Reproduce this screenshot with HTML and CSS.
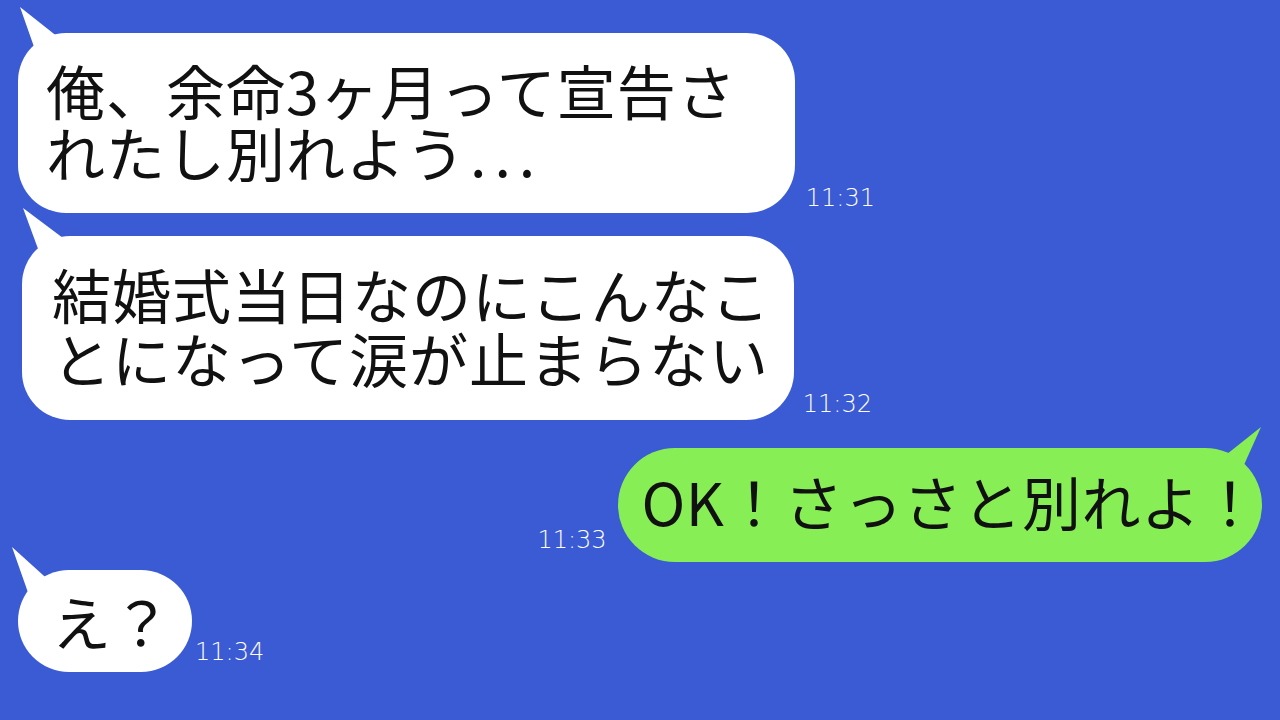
FILE: index.html
```html
<!DOCTYPE html>
<html lang="ja">
<head>
<meta charset="utf-8">
<link rel="stylesheet" href="styles.css">
</head>
<body>
<main class="chat">
  <div class="row row-1">
    <div class="bubble bubble-in b1">
      <svg class="tail tail-left" width="70" height="80" viewBox="0 0 70 80"><polygon points="12,4 60,42 55,70 31,58"/></svg>
      <p class="msg">俺、余命3ヶ月って宣告さ<br>れたし別れよう<span class="dots">...</span></p>
    </div>
    <span class="time t1">11:31</span>
  </div>
  <div class="row row-2">
    <div class="bubble bubble-in b2">
      <svg class="tail tail-left" width="70" height="80" viewBox="0 0 70 80"><polygon points="11,2 63,41 55,70 32,59"/></svg>
      <p class="msg">結婚式当日なのにこんなこ<br>とになって涙が止まらない</p>
    </div>
    <span class="time t2">11:32</span>
  </div>
  <div class="row row-out">
    <span class="time t3">11:33</span>
    <div class="bubble bubble-out b3">
      <svg class="tail tail-right" width="70" height="80" viewBox="0 0 70 80"><polygon points="59,9 15,44 20,75 37,58"/></svg>
      <p class="msg">OK！さっさと別れよ！</p>
    </div>
  </div>
  <div class="row row-4">
    <div class="bubble bubble-in b4">
      <svg class="tail tail-left" width="70" height="80" viewBox="0 0 70 80"><polygon points="4,7 46,45 50,70 23,61"/></svg>
      <p class="msg">え？</p>
    </div>
    <span class="time t4">11:34</span>
  </div>
</main>
</body>
</html>
```
FILE: styles.css
```css
html, body {
  margin: 0;
  padding: 0;
}
body {
  background: #3a5bd4;
  width: 1280px;
  height: 720px;
  overflow: hidden;
  font-family: "Noto Sans CJK JP", "Noto Sans", sans-serif;
}
.chat {
  display: flex;
  flex-direction: column;
}
.row {
  display: flex;
  align-items: flex-end;
  gap: 11px;
}
.row-1 {
  margin-top: 33px;
  padding-left: 18px;
}
.row-2 {
  margin-top: 23px;
  padding-left: 22px;
}
.row-out {
  margin-top: 28px;
  justify-content: flex-end;
  padding-right: 18px;
}
.row-4 {
  margin-top: 8px;
  padding-left: 18px;
}
.bubble {
  position: relative;
  border-radius: 48px;
}
.bubble-in {
  background: #ffffff;
}
.bubble-out {
  background: #88ee55;
  border-radius: 57px;
}
.tail {
  position: absolute;
  overflow: visible;
}
.bubble-in .tail {
  fill: #ffffff;
}
.bubble-out .tail {
  fill: #88ee55;
}
.tail-left {
  left: -10px;
  top: -30px;
}
.tail-right {
  right: -10px;
  top: -30px;
}
.msg {
  position: relative;
  margin: 0;
  color: #111111;
  font-size: 59px;
  letter-spacing: 1px;
  line-height: 62px;
  white-space: nowrap;
}
.dots {
  letter-spacing: 8px;
  margin-left: 4px;
}
.b1 .msg {
  padding: 26px 58px 30px 28px;
}
.b2 .msg {
  line-height: 64px;
  padding: 26px 23px 30px 30px;
}
.b3 .msg {
  letter-spacing: 0.5px;
  padding: 22px 2px 30px 24px;
}
.b4 .msg {
  padding: 20px 20px 20px 34px;
}
.b4 {
  border-radius: 51px;
}
.time {
  color: #ffffff;
  font-family: "DejaVu Sans", sans-serif;
  font-weight: 200;
  font-size: 24px;
  line-height: 1;
}
.t1 { margin-bottom: 3px; }
.t2 { margin-bottom: 4px; margin-left: -2px; }
.t3 { margin-bottom: 10px; }
.t4 { margin-bottom: 8px; margin-left: -8px; }
```
